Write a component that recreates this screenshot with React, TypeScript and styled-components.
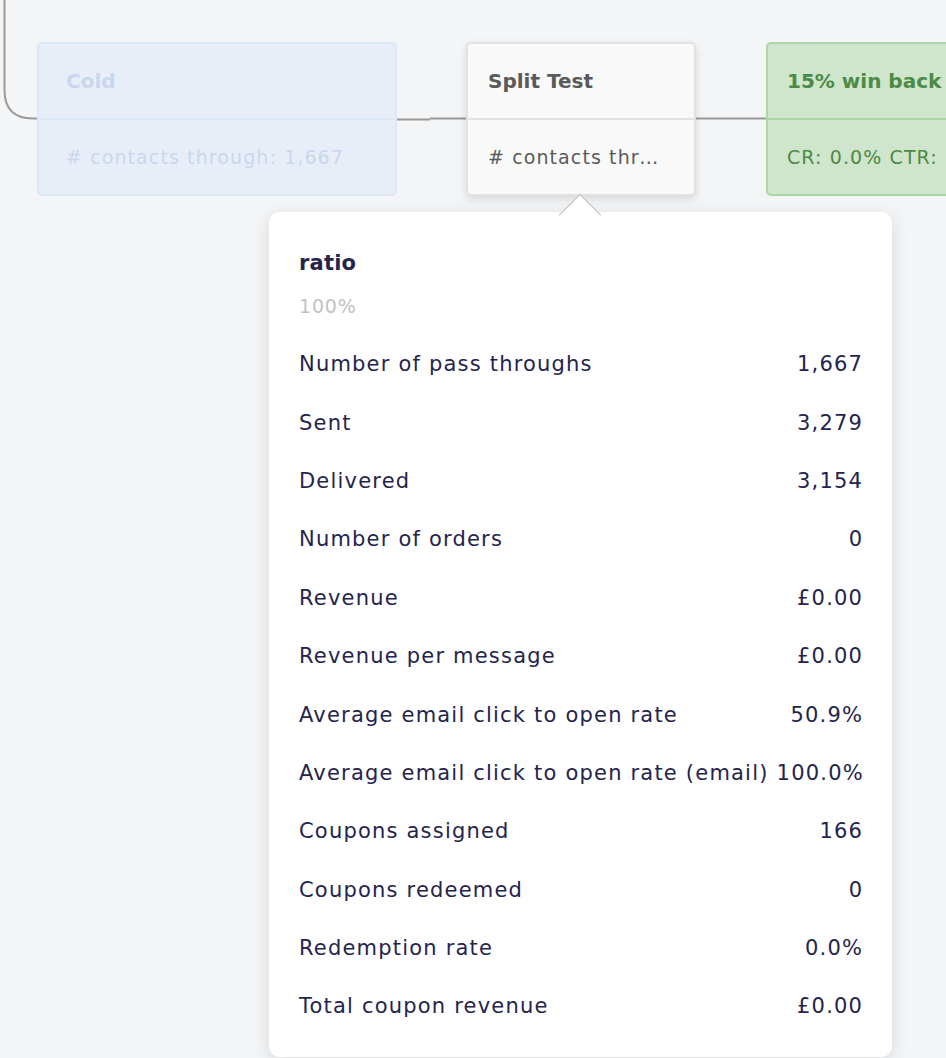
import React from "react";
import styled, { createGlobalStyle } from "styled-components";

const GlobalStyle = createGlobalStyle`
  html, body { margin: 0; padding: 0; background: #f4f5f7; }
  body { font-family: "DejaVu Sans", "Noto Sans", sans-serif; }
  * { box-sizing: border-box; }
`;

const Canvas = styled.div`
  position: relative;
  width: 946px;
  height: 1058px;
  overflow: hidden;
  background: #f4f5f7;
`;

const Wires = styled.svg`
  position: absolute;
  left: 0;
  top: 0;
  width: 946px;
  height: 240px;
`;

type Variant = "faded" | "neutral" | "green";

const palette: Record<Variant, { bg: string; border: string; text: string; shadow: string }> = {
  faded: { bg: "#e8eef8", border: "#dde8f6", text: "#c9d7ee", shadow: "none" },
  neutral: { bg: "#f9f9f9", border: "#e2e2e2", text: "#5a5a5a", shadow: "0 3px 8px rgba(0,0,0,0.12)" },
  green: { bg: "#cfe5cc", border: "#acd6a7", text: "#4b8b45", shadow: "none" },
};

const Node = styled.div<{ $v: Variant; $x: number; $w: number; $pad: number }>`
  position: absolute;
  top: 42px;
  left: ${(p) => p.$x}px;
  width: ${(p) => p.$w}px;
  height: 154px;
  display: grid;
  grid-template-rows: 76px 1fr;
  background: ${(p) => palette[p.$v].bg};
  border: 2px solid ${(p) => palette[p.$v].border};
  border-radius: 5px;
  box-shadow: ${(p) => palette[p.$v].shadow};
  color: ${(p) => palette[p.$v].text};
  overflow: hidden;
  --pad: ${(p) => p.$pad}px;
`;

const NodeHead = styled.div<{ $v: Variant }>`
  display: flex;
  align-items: center;
  padding: 0 var(--pad);
  font-size: 20px;
  font-weight: 700;
  letter-spacing: 0;
  white-space: nowrap;
  border-bottom: 2px solid ${(p) => palette[p.$v].border};
`;

const NodeBody = styled.div`
  display: flex;
  align-items: center;
  padding: 0 calc(var(--pad) + 10px) 0 var(--pad);
  font-size: 19px;
  letter-spacing: 1.1px;
  white-space: nowrap;
  overflow: hidden;
`;

const NodeBodyText = styled.span`
  overflow: hidden;
  text-overflow: ellipsis;
`;

const Popover = styled.div`
  position: absolute;
  left: 269px;
  top: 212px;
  width: 623px;
  height: 845px;
  background: #ffffff;
  border-radius: 11px;
  box-shadow: 0 4px 18px rgba(0, 0, 0, 0.12);
  padding: 37px 30px 0 30px;
  color: #24244d;
`;

const Arrow = styled.div`
  position: absolute;
  left: 296px;
  top: -12px;
  width: 30px;
  height: 30px;
  background: #ffffff;
  border-left: 1px solid #bdbdbd;
  border-top: 1px solid #bdbdbd;
  transform: rotate(45deg);
`;

const Title = styled.div`
  font-size: 21px;
  font-weight: 700;
  letter-spacing: 0.2px;
  line-height: 28px;
`;

const Sub = styled.div`
  margin-top: 17px;
  font-size: 19px;
  color: #c2c2c2;
  letter-spacing: 0.8px;
  line-height: 24px;
`;

const Rows = styled.div`
  margin-top: 17px;
  display: flex;
  flex-direction: column;
`;

const Row = styled.div`
  display: flex;
  justify-content: space-between;
  align-items: center;
  gap: 8px;
  height: 58.4px;
  font-size: 21px;
  letter-spacing: 1.2px;
  white-space: nowrap;
`;

const Label = styled.span``;

const Value = styled.span`
  margin-right: -1.2px;
`;

const rows: [string, string][] = [
  ["Number of pass throughs", "1,667"],
  ["Sent", "3,279"],
  ["Delivered", "3,154"],
  ["Number of orders", "0"],
  ["Revenue", "£0.00"],
  ["Revenue per message", "£0.00"],
  ["Average email click to open rate", "50.9%"],
  ["Average email click to open rate (email)", "100.0%"],
  ["Coupons assigned", "166"],
  ["Coupons redeemed", "0"],
  ["Redemption rate", "0.0%"],
  ["Total coupon revenue", "£0.00"],
];

export default function App() {
  return (
    <>
      <GlobalStyle />
      <Canvas>
        <Wires viewBox="0 0 946 240">
          <path d="M4.5 0 V90 Q4.5 118.5 33 118.5 H40" fill="none" stroke="#9a9a9a" strokeWidth="2" />
          <path d="M396 119.5 H430 M430 118.5 H468" fill="none" stroke="#9a9a9a" strokeWidth="2" />
          <path d="M695 118.5 H768" fill="none" stroke="#9a9a9a" strokeWidth="2" />
        </Wires>
        <Node $v="faded" $x={37} $w={360} $pad={27}>
          <NodeHead $v="faded">Cold</NodeHead>
          <NodeBody>
            <NodeBodyText># contacts through: 1,667</NodeBodyText>
          </NodeBody>
        </Node>
        <Node $v="neutral" $x={466} $w={230} $pad={20}>
          <NodeHead $v="neutral">Split Test</NodeHead>
          <NodeBody>
            <NodeBodyText># contacts through: 1,667</NodeBodyText>
          </NodeBody>
        </Node>
        <Node $v="green" $x={766} $w={260} $pad={19}>
          <NodeHead $v="green">15% win back</NodeHead>
          <NodeBody>
            <NodeBodyText>CR: 0.0% CTR: 50.9%</NodeBodyText>
          </NodeBody>
        </Node>
        <Popover>
          <Arrow />
          <Title>ratio</Title>
          <Sub>100%</Sub>
          <Rows>
            {rows.map(([k, v]) => (
              <Row key={k}>
                <Label>{k}</Label>
                <Value>{v}</Value>
              </Row>
            ))}
          </Rows>
        </Popover>
      </Canvas>
    </>
  );
}
